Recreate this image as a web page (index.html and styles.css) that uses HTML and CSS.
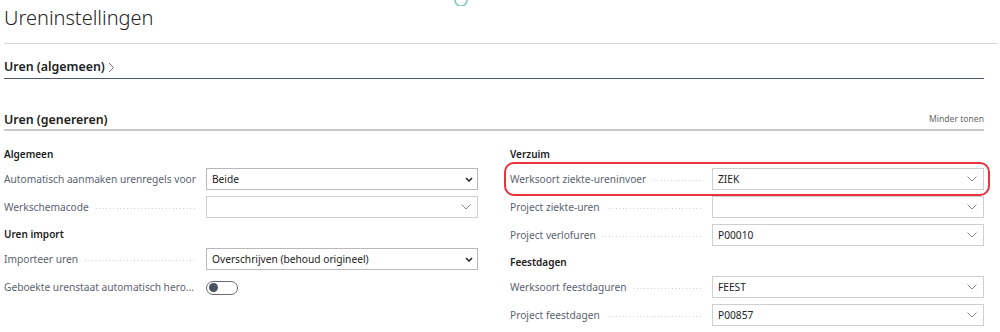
FILE: index.html
```html
<!DOCTYPE html>
<html lang="nl">
<head>
    <meta charset="UTF-8">
    <title>Ureninstellingen</title>
    <link rel="stylesheet" href="styles.css">
</head>
<body>
    <div class="page">
        <header class="page-header">
            <svg class="top-icon" width="14" height="6" viewBox="0 0 14 6"><path d="M1 0 A6 6 0 0 0 13 0" fill="none" stroke="#7fc6c4" stroke-width="1.6"/></svg>
            <h1>Ureninstellingen</h1>
        </header>

        <section class="fasttab">
            <div class="fasttab-head">
                <h2>Uren (algemeen)</h2>
                <svg class="head-chevron" width="7" height="11" viewBox="0 0 7 11"><path d="M1 1 L5.5 5.5 L1 10" fill="none" stroke="#777" stroke-width="1"/></svg>
            </div>
        </section>

        <section class="fasttab">
            <div class="fasttab-head open">
                <h2>Uren (genereren)</h2>
                <span class="less">Minder tonen</span>
            </div>

            <div class="columns">
                <div class="column">
                    <h3>Algemeen</h3>
                    <div class="field">
                        <div class="caption"><span class="label">Automatisch aanmaken urenregels voor</span><span class="dots"></span></div>
                        <div class="box native">Beide<svg class="caret" width="8" height="5" viewBox="0 0 8 5"><path d="M1 1 L4 4 L7 1" fill="none" stroke="#222" stroke-width="1.5"/></svg></div>
                    </div>
                    <div class="field">
                        <div class="caption"><span class="label">Werkschemacode</span><span class="dots"></span></div>
                        <div class="box"><svg class="caret" width="10" height="6" viewBox="0 0 10 6"><path d="M0.5 0.5 L5 5 L9.5 0.5" fill="none" stroke="#8a8a8a" stroke-width="1"/></svg></div>
                    </div>

                    <h3>Uren import</h3>
                    <div class="field">
                        <div class="caption"><span class="label">Importeer uren</span><span class="dots"></span></div>
                        <div class="box native">Overschrijven (behoud origineel)<svg class="caret" width="8" height="5" viewBox="0 0 8 5"><path d="M1 1 L4 4 L7 1" fill="none" stroke="#222" stroke-width="1.5"/></svg></div>
                    </div>
                    <div class="field">
                        <div class="caption"><span class="label">Geboekte urenstaat automatisch hero...</span><span class="dots"></span></div>
                        <div class="toggle-cell"><span class="toggle"><span class="knob"></span></span></div>
                    </div>
                </div>

                <div class="column">
                    <h3>Verzuim</h3>
                    <div class="field highlight">
                        <div class="caption"><span class="label">Werksoort ziekte-ureninvoer</span><span class="dots"></span></div>
                        <div class="box">ZIEK<svg class="caret" width="10" height="6" viewBox="0 0 10 6"><path d="M0.5 0.5 L5 5 L9.5 0.5" fill="none" stroke="#8a8a8a" stroke-width="1"/></svg></div>
                    </div>
                    <div class="field">
                        <div class="caption"><span class="label">Project ziekte-uren</span><span class="dots"></span></div>
                        <div class="box"><svg class="caret" width="10" height="6" viewBox="0 0 10 6"><path d="M0.5 0.5 L5 5 L9.5 0.5" fill="none" stroke="#8a8a8a" stroke-width="1"/></svg></div>
                    </div>
                    <div class="field">
                        <div class="caption"><span class="label">Project verlofuren</span><span class="dots"></span></div>
                        <div class="box">P00010<svg class="caret" width="10" height="6" viewBox="0 0 10 6"><path d="M0.5 0.5 L5 5 L9.5 0.5" fill="none" stroke="#8a8a8a" stroke-width="1"/></svg></div>
                    </div>

                    <h3>Feestdagen</h3>
                    <div class="field">
                        <div class="caption"><span class="label">Werksoort feestdaguren</span><span class="dots"></span></div>
                        <div class="box">FEEST<svg class="caret" width="10" height="6" viewBox="0 0 10 6"><path d="M0.5 0.5 L5 5 L9.5 0.5" fill="none" stroke="#8a8a8a" stroke-width="1"/></svg></div>
                    </div>
                    <div class="field">
                        <div class="caption"><span class="label">Project feestdagen</span><span class="dots"></span></div>
                        <div class="box">P00857<svg class="caret" width="10" height="6" viewBox="0 0 10 6"><path d="M0.5 0.5 L5 5 L9.5 0.5" fill="none" stroke="#8a8a8a" stroke-width="1"/></svg></div>
                    </div>
                </div>
            </div>
        </section>
    </div>
</body>
</html>
```

FILE: styles.css
```css
body {
    margin: 0;
    background: #fff;
    font-family: 'Noto Sans', 'Open Sans', sans-serif;
    color: #212121;
    overflow: hidden;
}
.page {
    padding: 0 3px 0 4px;
}
.page-header {
    position: relative;
    height: 43px;
    border-bottom: 1px solid #d6d6d6;
}
.top-icon {
    position: absolute;
    left: 450px;
    top: 0;
}
h1 {
    margin: 0;
    padding-top: 2px;
    font-size: 20px;
    font-weight: 300;
    line-height: 32px;
    color: #262626;
}
.fasttab {
    margin-right: 13px;
}
.fasttab-head {
    display: flex;
    align-items: center;
    height: 23px;
    margin-top: 11px;
    border-bottom: 1.5px solid #4d5566;
}
.fasttab-head.open {
    margin-top: 30px;
    height: 20px;
    border-bottom: 2px solid #c8c8c8;
    justify-content: space-between;
}
h2 {
    margin: 0;
    font-size: 12.4px;
    font-weight: 600;
    color: #212121;
}
.head-chevron {
    margin-left: 3px;
    margin-top: 1px;
}
.less {
    font-size: 8.6px;
    color: #666;
}
.columns {
    display: grid;
    grid-template-columns: 1fr 1fr;
    column-gap: 32px;
    padding-top: 12px;
}
h3 {
    margin: 0;
    font-size: 10px;
    font-weight: 600;
    line-height: 22px;
    height: 22px;
}
h3 + .field {
    margin-top: 3px;
}
.field + h3 {
    margin-top: -1px;
}
.field {
    display: flex;
    align-items: center;
    height: 22px;
    margin-bottom: 6px;
    font-size: 10.2px;
}
.caption {
    width: 202px;
    display: flex;
    align-items: center;
    overflow: hidden;
}
.label {
    color: #5c6370;
    white-space: nowrap;
}
.dots {
    flex: 1;
    height: 1px;
    margin: 3px 9px 0 6px;
    background-image: linear-gradient(to right, #c4c4c4 1px, transparent 1px);
    background-size: 3.5px 1px;
    background-position: right;
}
.box {
    width: 272px;
    height: 22px;
    box-sizing: border-box;
    border: 1px solid #cfcfcf;
    display: flex;
    align-items: center;
    padding: 0 6px 0 5px;
    color: #212121;
}
.box.native {
    border-color: #b8b8b8;
    padding-right: 4px;
}
.caret {
    margin-left: auto;
}
.highlight {
    outline: 2px solid #e8333c;
    outline-offset: 4px;
    border-radius: 4px;
}
.toggle-cell {
    width: 272px;
    display: flex;
}
.toggle {
    width: 26px;
    height: 12px;
    border: 1px solid #6a6a6a;
    border-radius: 8px;
    display: flex;
    align-items: center;
    padding: 0 2px;
    margin-top: 1px;
}
.knob {
    width: 9px;
    height: 9px;
    border-radius: 50%;
    background: #4a5366;
}
```
